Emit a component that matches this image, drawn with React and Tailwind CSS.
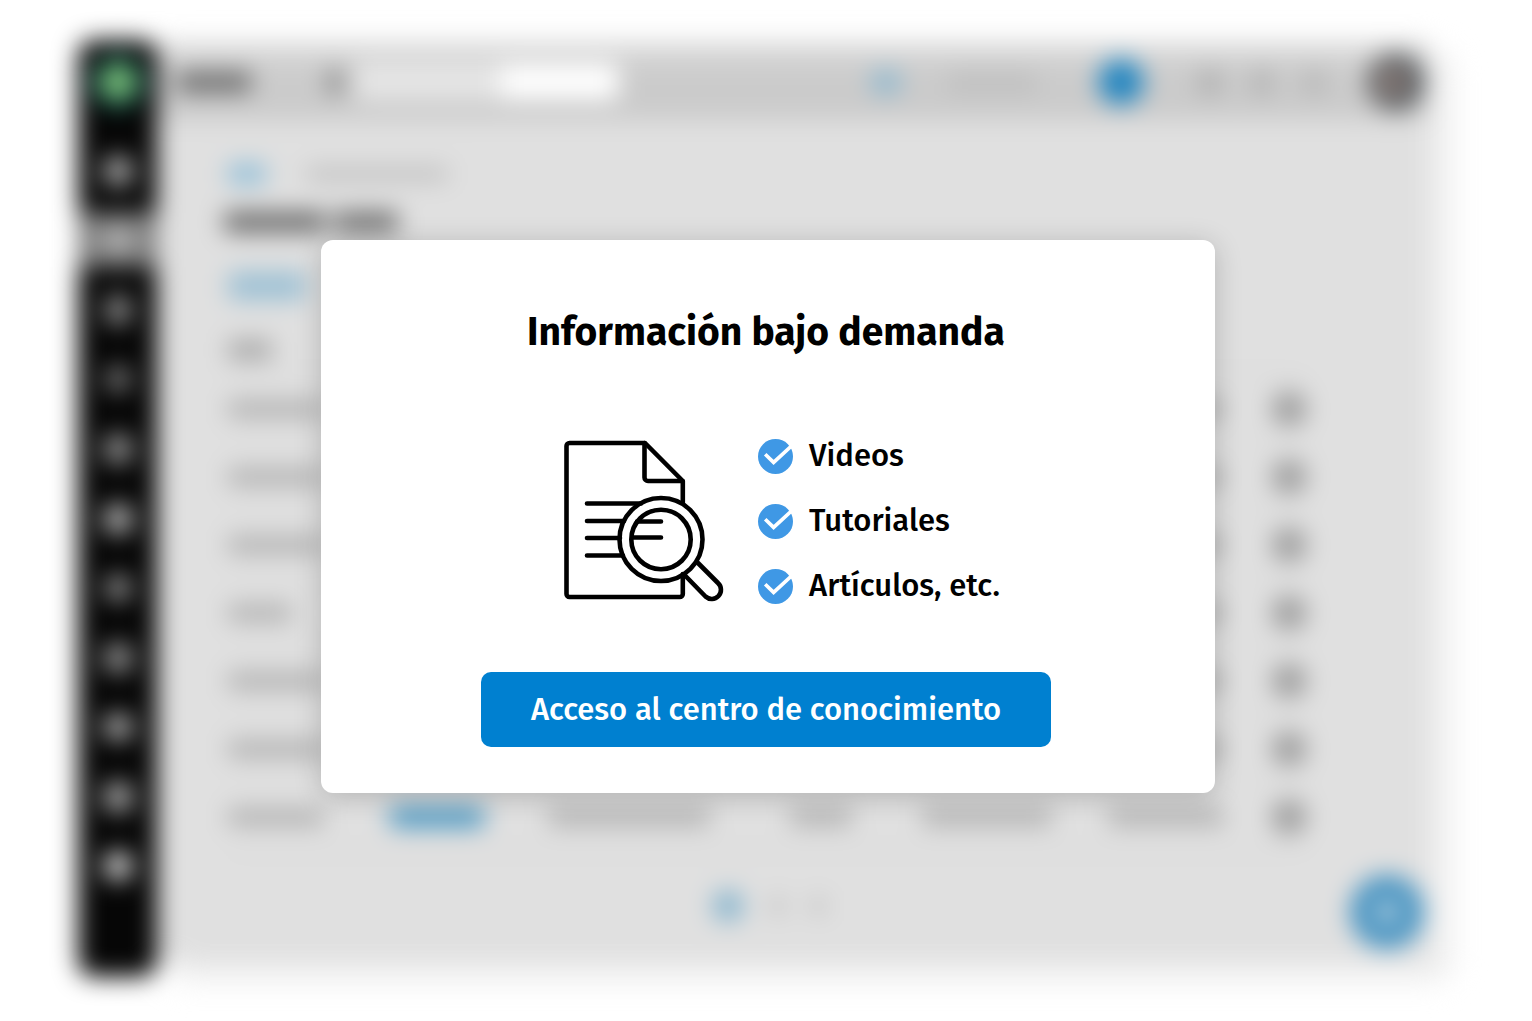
const NAV_ITEMS = [
  { id: 'inicio', icon: 'size-7 rounded-lg bg-[#b0b0b0]' },
  { id: 'casos', icon: 'size-7 rounded-lg bg-[#b0b0b0]', active: true },
  { id: 'buscar', icon: 'h-7 w-6 rounded-lg bg-[#9a9a9a]' },
  { id: 'enlaces', icon: 'size-6 rounded-lg bg-[#808080]' },
  { id: 'personas', icon: 'size-7 rounded-lg bg-[#969696]' },
  { id: 'agenda', icon: 'size-7 rounded-lg bg-[#bababa]' },
  { id: 'mensajes', icon: 'size-6 rounded-lg bg-[#a0a0a0]' },
  { id: 'tiempo', icon: 'size-7 rounded-lg bg-[#969696]' },
  { id: 'archivos', icon: 'h-6 w-7 rounded-lg bg-[#bababa]' },
  { id: 'informes', icon: 'size-7 rounded-lg bg-[#b0b0b0]' },
  { id: 'ayuda', icon: 'size-7 rounded-full bg-[#eeeeee]' },
];

const ROWS = [
  { id: 1, first: 'w-24' },
  { id: 2, first: 'w-24' },
  { id: 3, first: 'w-24' },
  { id: 4, first: 'w-16' },
  { id: 5, first: 'w-24' },
  { id: 6, first: 'w-24' },
  { id: 7, first: 'w-24' },
];

const FEATURES = ['Videos', 'Tutoriales', 'Artículos, etc.'];

const Sidebar = () => (
  <div className="flex w-[79px] shrink-0 flex-col items-center rounded-2xl bg-[#060606] pb-[76px]">
    <div className="mt-4 mb-5 flex size-[52px] shrink-0 items-center justify-center rounded-full bg-[#1f645c]">
      <div className="size-8 rounded-full bg-[#84c474]" />
    </div>
    <div className="mt-2 flex w-full flex-1 flex-col">
      {NAV_ITEMS.map((item) => (
        <div key={item.id} className="flex w-full flex-1 items-center justify-center">
          <div
            className={
              item.active
                ? 'flex h-[54px] w-full items-center justify-center bg-[#808080]'
                : 'flex items-center justify-center'
            }
          >
            <div className={item.icon} />
          </div>
        </div>
      ))}
    </div>
  </div>
);

const TopBar = () => (
  <div className="flex h-20 items-center bg-linear-to-b from-[#e2e2e2] to-[#cbcbcb] to-40% pt-1 pr-1 pl-5">
    <div className="h-5 w-[74px] rounded bg-[#6a6a6a]" />
    <div className="ml-[76px] h-6 w-4 rounded-md bg-[#848484]" />
    <div className="ml-3 flex h-9 w-[264px] rounded-lg bg-white">
      <div className="w-[146px] rounded-l-lg bg-[#e6e6e6]" />
    </div>
    <div className="ml-auto flex items-center">
      <div className="h-6 w-8 rounded-full bg-[#90b8ce]" />
      <div className="ml-[46px] h-5 w-[88px] rounded bg-[#bfbfbf]" />
      <div className="ml-[62px] size-[46px] rounded-full bg-[#2486c0]" />
      <div className="ml-[54px] size-6 rounded bg-[#b0b0b0]" />
      <div className="ml-7 size-6 rounded bg-[#b4b4b4]" />
      <div className="ml-7 size-6 rounded bg-[#b8b8b8]" />
      <div className="ml-10 flex size-[58px] items-center justify-center rounded-full bg-linear-to-r from-[#747272] to-[#4c5256]">
        <div className="size-5 rounded-full bg-[#a88c84]" />
      </div>
    </div>
  </div>
);

const CaseTable = () => (
  <table className="mt-[14px] w-full table-fixed border-y-2 border-[#cfcfcf]">
    <tbody>
      {ROWS.map((row) => (
        <tr key={row.id} className="h-[68px] border-b-2 border-[#cfcfcf]">
          <td className="w-[160px]">
            <div className={`${row.first} h-4 rounded bg-[#acacac]`} />
          </td>
          <td className="w-[160px]">
            <div className="h-5 w-[98px] rounded-full bg-[#4494c0]" />
          </td>
          <td className="w-[242px]">
            <div className="h-4 w-[162px] rounded bg-[#acacac]" />
          </td>
          <td className="w-[132px]">
            <div className="h-4 w-[62px] rounded bg-[#acacac]" />
          </td>
          <td className="w-[186px]">
            <div className="h-4 w-[130px] rounded bg-[#acacac]" />
          </td>
          <td>
            <div className="h-4 w-[116px] rounded bg-[#acacac]" />
          </td>
          <td className="w-9">
            <div className="size-9 rounded-full bg-[#a0a0a0]" />
          </td>
        </tr>
      ))}
    </tbody>
  </table>
);

// Out-of-focus dashboard behind the dialog
const Backdrop = () => (
  <div className="flex h-full pt-10 pr-[104px] pb-11 pl-[78px] blur-[12px]" aria-hidden="true">
    <Sidebar />
    <div className="relative min-w-0 flex-1">
      <div className="h-full pb-4">
        <div className="h-full rounded-r-xl bg-[#e0e0e0] shadow-[20px_16px_16px_4px_#eeeeee]">
          <TopBar />
          <div className="pr-[121px] pl-[71px]">
            <div className="flex items-center gap-10 pt-11">
              <div className="h-5 w-[38px] rounded bg-[#90bed8]" />
              <div className="h-3 w-[142px] rounded bg-[#bbbbbb]" />
            </div>
            <div className="mt-7 -ml-1 flex gap-2">
              <div className="h-5 w-[102px] rounded bg-[#666666]" />
              <div className="h-5 w-[64px] rounded bg-[#6a6a6a]" />
            </div>
            <div className="mt-10 h-7 w-[78px] rounded-md bg-[#9cc0d4]" />
            <div className="mt-10 h-5 w-11 rounded bg-[#a8a8a8]" />
            <CaseTable />
            <div className="mt-[38px] flex items-center justify-center gap-7">
              <div className="size-8 rounded-full bg-[#8ab6ce]" />
              <div className="h-4 w-3 rounded bg-[#b8b8b8]" />
              <div className="h-4 w-3 rounded bg-[#b8b8b8]" />
            </div>
          </div>
        </div>
      </div>
      <div className="absolute right-1 bottom-7 flex size-[74px] items-center justify-center rounded-full bg-[#4894c2]">
        <div className="size-5 rounded-full bg-[#dde6ea]" />
      </div>
    </div>
  </div>
);

const DocumentSearchIcon = () => (
  <svg
    viewBox="0 0 160 164"
    className="h-[164px] w-40 shrink-0"
    fill="none"
    stroke="#000"
    strokeWidth="4.6"
    strokeLinecap="round"
    strokeLinejoin="round"
    aria-hidden="true"
  >
    <path d="M118.8 64V42L81 4H5.5a3 3 0 0 0-3 3v148a3 3 0 0 0 3 3h110.3a3 3 0 0 0 3-3V135" />
    <path d="M80.5 4v34.5a3.5 3.5 0 0 0 3.5 3.5h34.5" />
    <path d="M23 64.5h54M23 82h37M23 99h33M23 116.5h36" />
    <path d="M73 82.5h24M69 98.5h28" />
    <circle cx="97" cy="100.5" r="41.5" />
    <circle cx="97" cy="100.5" r="29.7" />
    <path d="M134 124l20 20a8.6 8.6 0 0 1-12.5 13.5L121.5 137" />
  </svg>
);

const CheckIcon = () => (
  <svg viewBox="0 0 35 35" className="size-[35px] shrink-0" fill="none" aria-hidden="true">
    <circle cx="17.5" cy="17.5" r="17.5" fill="#3f98e5" />
    <path d="M7.2 15.2l8.4 8.2L35 5.6" stroke="#fff" strokeWidth="3.6" />
  </svg>
);

const KnowledgeDialog = () => (
  <section
    role="dialog"
    aria-labelledby="dialog-title"
    className="flex w-full max-w-[894px] flex-col items-center rounded-xl bg-white pt-16 pr-1 pb-[46px] text-black shadow-[0_4px_28px_rgba(0,0,0,0.2)]"
  >
    <h1 id="dialog-title" className="text-[39px] leading-[56px] font-bold">
      Información bajo demanda
    </h1>
    <div className="mt-[78px] flex items-center gap-[34px] pl-8">
      <DocumentSearchIcon />
      <ul className="flex flex-col gap-[29px]">
        {FEATURES.map((feature) => (
          <li key={feature} className="flex h-9 items-center gap-4 text-[31px] leading-9 font-medium">
            <CheckIcon />
            {feature}
          </li>
        ))}
      </ul>
    </div>
    <button
      type="button"
      className="mt-[68px] h-[75px] w-[570px] cursor-pointer rounded-[10px] bg-[#0080d0] pt-0.5 text-[31px] font-medium text-white"
    >
      Acceso al centro de conocimiento
    </button>
  </section>
);

export default function App() {
  return (
    <main className="relative h-screen overflow-hidden bg-white font-['Fira_Sans','Noto_Sans',sans-serif]">
      <Backdrop />
      <div className="absolute inset-0 flex items-center justify-center pt-3 pl-1">
        <KnowledgeDialog />
      </div>
    </main>
  );
}
